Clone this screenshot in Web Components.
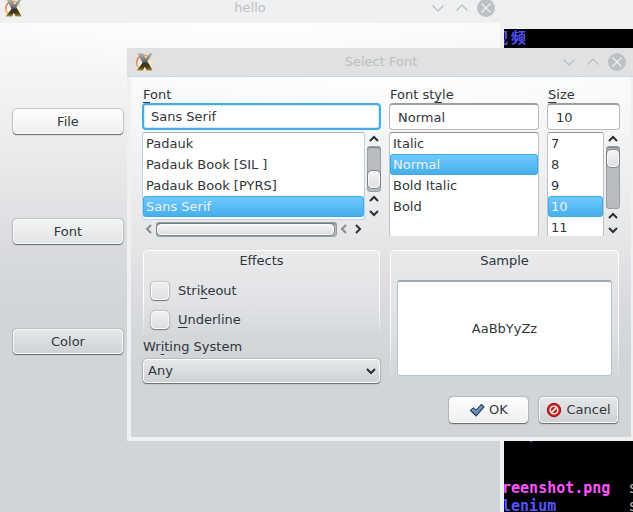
<!DOCTYPE html>
<html lang="en">
<head>
<meta charset="utf-8">
<title>hello</title>
<style>
html, body { height: 100%; margin: 0; }
body { background: #000; font: 13px/18px "DejaVu Sans", "Noto Sans CJK SC", sans-serif; color: #31363b; overflow: hidden; }
</style>
</head>
<body>
<desk-top></desk-top>

<script>
const define = (name, html, setup) => {
  const template = document.createElement('template');
  template.innerHTML = `<style>*{box-sizing:border-box} button,input,select{font:inherit;color:inherit;margin:0}</style>` + html;
  customElements.define(name, class extends HTMLElement {
    constructor() {
      super();
      this.attachShadow({ mode: 'open' }).append(template.content.cloneNode(true));
    }
    connectedCallback() {
      if (this.ready) return;
      this.ready = true;
      if (setup) setup(this, this.shadowRoot);
    }
  });
};

/* Marks the access key: "Stri_keout" underlines the letter after "_". */
const mnemonic = text => text.replace(/_(.)/, '<u>$1</u>');
const underline = 'u{text-decoration:underline;text-underline-offset:3px;text-decoration-thickness:1px;text-decoration-skip-ink:none}';

define('app-logo', `
<style>:host{display:block;width:20px;height:20px} svg{display:block}</style>
<svg width="20" height="20" viewBox="0 0 20 20" aria-hidden="true">
  <defs>
    <linearGradient id="x" x1="0" y1="0" x2="0" y2="1"><stop offset="0" stop-color="#b4b6b5"/><stop offset=".42" stop-color="#777876"/><stop offset=".6" stop-color="#34332f"/><stop offset=".8" stop-color="#4a3b12"/><stop offset="1" stop-color="#a78a38"/></linearGradient>
    <linearGradient id="o" x1="0" y1="0" x2="1" y2="1"><stop offset="0" stop-color="#f4571b"/><stop offset=".35" stop-color="#ffa04a"/><stop offset=".6" stop-color="#ffe08a"/><stop offset="1" stop-color="#fff6dc"/></linearGradient>
  </defs>
  <circle cx="9" cy="10.5" r="7.300" fill="#fff" fill-opacity=".4" stroke="url(#o)" stroke-width="1.600"/>
  <path d="M14.600 1.200H17.800L12.400 9.200 8 18.500H1.800L7.800 10.600Z" fill="url(#x)"/>
  <path d="M2.400 1.200H7.800L17.600 18.500H11.800Z" fill="url(#x)"/>
</svg>`);

define('desk-window', `
<style>
:host{display:flex;flex-direction:column;background:#eff0f1;--bar:#eff0f1}
:host([dialog]){--bar:#e0e1e2;--line:#c5dbe2}
header{display:grid;grid-template-columns:72px 1fr 72px;align-items:center;height:29px;padding:0 8px;background:var(--bar);border-bottom:1px solid var(--line,var(--bar));color:#bcbfc1}
h1{margin:0;font:inherit;text-align:center}
nav{display:flex;gap:4px;justify-content:flex-end}
nav button{width:20px;height:20px;padding:0;border:0;background:none}
svg{display:block;fill:none;stroke:#b9bdc0;stroke-width:1.2}
main{flex:1;display:flex;flex-direction:column;margin:0 4px 4px;
  background:radial-gradient(ellipse 260px 60px at 50% 0,#fffc,#fff0),linear-gradient(#fafbfb 0,#eff0f1 90px,#e4e5e7 170px,#d8dadd 230px,#d1d5d7 290px)}
</style>
<header>
  <app-logo></app-logo>
  <h1></h1>
  <nav>
    <button aria-label="Minimize"><svg width="20" height="20"><path d="M4.500 7.500l5.500 5.500 5.500-5.500"/></svg></button>
    <button aria-label="Maximize"><svg width="20" height="20"><path d="M4.500 12.500l5.500-5.500 5.500 5.500"/></svg></button>
    <button aria-label="Close"><svg width="20" height="20"><circle cx="10" cy="10" r="9" fill="#bcc1c4" stroke="none"/><path d="M5.500 5.500l9 9M14.500 5.500l-9 9" stroke="#eff0f1"/></svg></button>
  </nav>
</header>
<main><slot></slot></main>`, (host, root) => {
  root.querySelector('h1').textContent = host.getAttribute('heading');
});

define('push-button', `
<style>
:host{display:block;--top:#f3f4f4;--end:#e2e3e5}
:host([tone=light]){--top:#fdfdfd;--end:#eeeff0}
:host([tone=dark]){--top:#e5e7e8;--end:#cfd2d5}
button{display:flex;align-items:center;justify-content:center;gap:4px;width:100%;height:var(--height,25px);padding:0 7px;
 border:1px solid #f8f9f9;border-radius:4px;background:linear-gradient(var(--top),var(--end));box-shadow:0 1px 1px #666a6d,0 0 1px 1px #9da1a480}
</style>
<button><slot name="icon"></slot><span><slot></slot></span></button>`);

define('text-field', `
<style>
:host{display:flex;flex-direction:column}
${underline}
label{height:18px;padding-left:1px;line-height:20px}
input{width:100%;height:27px;padding:0 8px;border:1px solid #b9bcbe;border-top:2px solid #9b9fa1;border-radius:4px;background:#fff;outline:none}
:host([active]) input{border:2px solid #47ade0;padding:0 7px;box-shadow:inset 0 0 1px 1px #c9e9f8}
</style>
<label for="f"></label><input id="f">`, (host, root) => {
  root.querySelector('label').innerHTML = mnemonic(host.getAttribute('label'));
  root.querySelector('input').setAttribute('value', host.getAttribute('value'));
});

define('list-box', `
<style>
:host{display:block;min-width:0;min-height:0}
select{display:block;width:100%;height:100%;padding:0;overflow:hidden;border:1px solid #c0c3c5;border-top-color:#8f9395;border-bottom-color:#e2e4e6;border-radius:3px;background:#fff;outline:none;scrollbar-width:none}
:host([active]) select{border-color:#9fb7c3 #bdd3de #bdd3de}
option{height:21px;min-height:21px;padding:3px 3px 0;color:#31363b}
option:checked{border-radius:3px;color:#eff0f1;background:#5abcf0 linear-gradient(#71caff,#43aee9);box-shadow:inset 0 0 0 1px #3fabe5}
</style>
<select></select>`, (host, root) => {
  const select = root.querySelector('select');
  const items = host.getAttribute('items').split('|');
  select.size = items.length;
  select.setAttribute('aria-label', host.getAttribute('label'));
  for (const item of items) select.add(new Option(item, item, item === host.getAttribute('value'), item === host.getAttribute('value')));
});

define('scroll-bar', `
<style>
:host{display:flex;flex-direction:column}
button{flex:none;width:14px;height:14px;padding:0;border:0;background:none}
svg{display:block;fill:none;stroke:#2c3034;stroke-width:2}
.groove{flex:1;display:flex;flex-direction:column;padding:1px;border-radius:4px;background:#b8bcc0;box-shadow:inset 0 0 0 1px #9a9ea1,inset 0 2px 1px #7f8386}
.before{flex:var(--before)} .after{flex:var(--after)}
.thumb{flex:none;height:17px;border:1px solid #fafafa;border-radius:4px;background:linear-gradient(#f4f4f5,#dddfe1);box-shadow:0 0 0 1px #707477b0}
:host([horizontal]), :host([horizontal]) .groove{flex-direction:row}
:host([horizontal]) .groove{padding:2px 1px}
:host([horizontal]) .thumb{flex:174;height:auto}
:host([horizontal]) svg{transform:rotate(-90deg)}
:host([horizontal]) .back{opacity:.5}
</style>
<button class="back" aria-label="Scroll back"><svg width="14" height="14"><path d="M3 9l4-4 4 4"/></svg></button>
<div class="groove" role="scrollbar" aria-valuenow="0"><div class="before"></div><div class="thumb"></div><div class="after"></div></div>
<button class="back" aria-label="Page back"><svg width="14" height="14"><path d="M3 9l4-4 4 4"/></svg></button>
<button aria-label="Scroll forward"><svg width="14" height="14"><path d="M3 5l4 4 4-4"/></svg></button>`);

define('group-box', `
<style>
:host{display:flex;flex-direction:column;position:relative;margin:0 1px;padding:2px 7px 7px}
:host::before{content:"";position:absolute;inset:0;border:1px solid #fff;border-bottom:0;border-radius:4px;background:#ffffff38;box-shadow:0 0 1px 1px #7e8285a0;-webkit-mask:linear-gradient(#000 60%,transparent);mask:linear-gradient(#000 60%,transparent)}
h2{position:relative;margin:0 0 6px;font:inherit;text-align:center}
.body{position:relative;flex:1;display:flex;flex-direction:column}
</style>
<h2></h2><div class="body"><slot></slot></div>`, (host, root) => {
  root.querySelector('h2').textContent = host.getAttribute('heading');
});

define('check-box', `
<style>
:host{display:block}
${underline}
label{display:flex;align-items:center;gap:9px;height:29px}
input{appearance:none;flex:none;width:18px;height:18px;margin:0 0 0 1px;border:1px solid #f9f9fa;border-radius:4px;background:linear-gradient(#eeeff0,#dfe0e2);box-shadow:0 1px 1px #777b7e,0 0 1px 1px #9da1a480}
</style>
<label><input type="checkbox"><span></span></label>`, (host, root) => {
  root.querySelector('span').innerHTML = mnemonic(host.getAttribute('label'));
});

define('drop-down', `
<style>
:host{display:block}
${underline}
label{display:block;height:18px;margin:0 1px 3px}
.box{display:grid;align-items:center;margin:0 1px}
select,svg{grid-area:1/1}
select{appearance:none;width:100%;height:24px;padding:0 4px;border:1px solid #f8f9f9;border-radius:4px;background:linear-gradient(#e5e7e8,#cfd2d5);box-shadow:0 1px 1px #666a6d,0 0 1px 1px #9da1a480}
svg{justify-self:end;margin-right:2px;fill:none;stroke:#2c3034;stroke-width:2;pointer-events:none}
</style>
<label for="s"></label>
<div class="box"><select id="s"></select><svg width="14" height="14"><path d="M3 5l4 4 4-4"/></svg></div>`, (host, root) => {
  root.querySelector('label').innerHTML = mnemonic(host.getAttribute('label'));
  root.querySelector('select').add(new Option(host.getAttribute('value')));
});

define('font-dialog', `
<style>
:host{display:flex;flex-direction:column;gap:13px;padding:8px 11px 12px}
.grid{display:grid;grid-template-columns:239fr 150fr 73fr;column-gap:8px}
.pickers{grid-template-rows:auto 105px;row-gap:2px}
.family{display:grid;grid-template:88px 15px / 1fr 14px;gap:2px}
.size{display:grid;grid-template:minmax(0,1fr) / 1fr 14px;gap:2px}
.sample{grid-column:2 / 4}
.family scroll-bar:first-of-type{--before:24;--after:3}
.family scroll-bar[horizontal]{--before:0;--after:2}
.size scroll-bar{--before:3;--after:41}
.left{display:flex;flex-direction:column}
.left group-box{padding-bottom:4px}
.sample input{flex:1;width:100%;height:96px;margin-top:4px;padding:0;border:1px solid #b4c6cd;border-top:2px solid #98adb7;border-radius:3px;background:#fff;text-align:center;font:inherit;color:inherit}
footer{display:flex;justify-content:flex-end;gap:11px;padding:1px 2px 2px 0;--height:26px}
footer push-button{width:79px}
svg{display:block;flex:none}
</style>
<div class="grid pickers">
  <text-field active label="_Font" value="Sans Serif"></text-field>
  <text-field label="Font st_yle" value="Normal"></text-field>
  <text-field label="_Size" value="10"></text-field>
  <div class="family">
    <list-box active label="Font" items="Padauk|Padauk Book [SIL ]|Padauk Book [PYRS]|Sans Serif" value="Sans Serif"></list-box>
    <scroll-bar></scroll-bar>
    <scroll-bar horizontal></scroll-bar>
  </div>
  <list-box label="Font style" items="Italic|Normal|Bold Italic|Bold" value="Normal"></list-box>
  <div class="size">
    <list-box label="Size" items="7|8|9|10|11" value="10"></list-box>
    <scroll-bar></scroll-bar>
  </div>
</div>
<div class="grid">
  <div class="left">
    <group-box heading="Effects">
      <check-box label="Stri_keout"></check-box>
      <check-box label="_Underline"></check-box>
    </group-box>
    <drop-down label="Wr_iting System" value="Any"></drop-down>
  </div>
  <group-box class="sample" heading="Sample"><input aria-label="Sample" value="AaBbYyZz"></group-box>
</div>
<footer>
  <push-button tone="light"><svg slot="icon" width="16" height="16" viewBox="0 0 16 16"><path d="M1.500 8.500L4.500 5.800 7 8.300 12.500 2.500 15 4.800 7.300 14Z" fill="#5f89ad" stroke="#263f58" stroke-width="1.100" stroke-linejoin="round"/><path d="M3 8.400l1.500-1.300L7 9.800l5.600-5.900" fill="none" stroke="#8fb2cd"/></svg>OK</push-button>
  <push-button tone="dark"><svg slot="icon" width="16" height="16" viewBox="0 0 16 16"><circle cx="8" cy="8" r="6.700" fill="#c9211c" stroke="#a01010"/><circle cx="8" cy="8" r="3.800" fill="#b3110e" stroke="#f3e5e4" stroke-width="1.600"/><path d="M5.500 10.500l5-5" stroke="#f3e5e4" stroke-width="2"/></svg>Cancel</push-button>
</footer>`);

define('term-view', `
<style>
:host{display:flex;flex-direction:column;background:#000}
header{flex:none;height:29px;background:#eff0f1}
.rows{display:grid;grid-template-rows:repeat(27,18px);font:15px/18px "DejaVu Sans Mono","Noto Sans CJK SC",monospace;color:#b2b2b2;white-space:pre}
b.dir{color:#5454ff} b.img{color:#ff54ff}
.wide{display:inline-block;width:18px}
.r0{grid-row:1} .r22{grid-row:23} .r25{grid-row:26} .r26{grid-row:27}
</style>
<header></header>
<div class="rows">
<div class="r0"><b class="dir"><span class="wide">视</span><span class="wide">频</span></b></div>
<div class="r22"><b class="dir">    p</b></div>
<div class="r25"> <b class="img">reenshot.png</b>  s</div>
<div class="r26"> <b class="dir">lenium</b>        s</div>
</div>`);

define('desk-top', `
<style>
:host{display:block;position:relative;height:100%;overflow:hidden}
term-view{position:absolute;inset:0 0 0 493px}
.hello{position:absolute;inset:-6px 129px -20px -4px}
.dialog{position:absolute;top:48px;left:127px;right:-2px}
.actions{display:flex;flex-direction:column;gap:85px;width:123px;padding:86px 0 0 13px}
</style>
<term-view></term-view>
<desk-window class="hello" heading="hello">
  <div class="actions">
    <push-button tone="light">File</push-button>
    <push-button>Font</push-button>
    <push-button tone="dark">Color</push-button>
  </div>
</desk-window>
<desk-window class="dialog" dialog heading="Select Font"><font-dialog></font-dialog></desk-window>`);
</script>
</body>
</html>
